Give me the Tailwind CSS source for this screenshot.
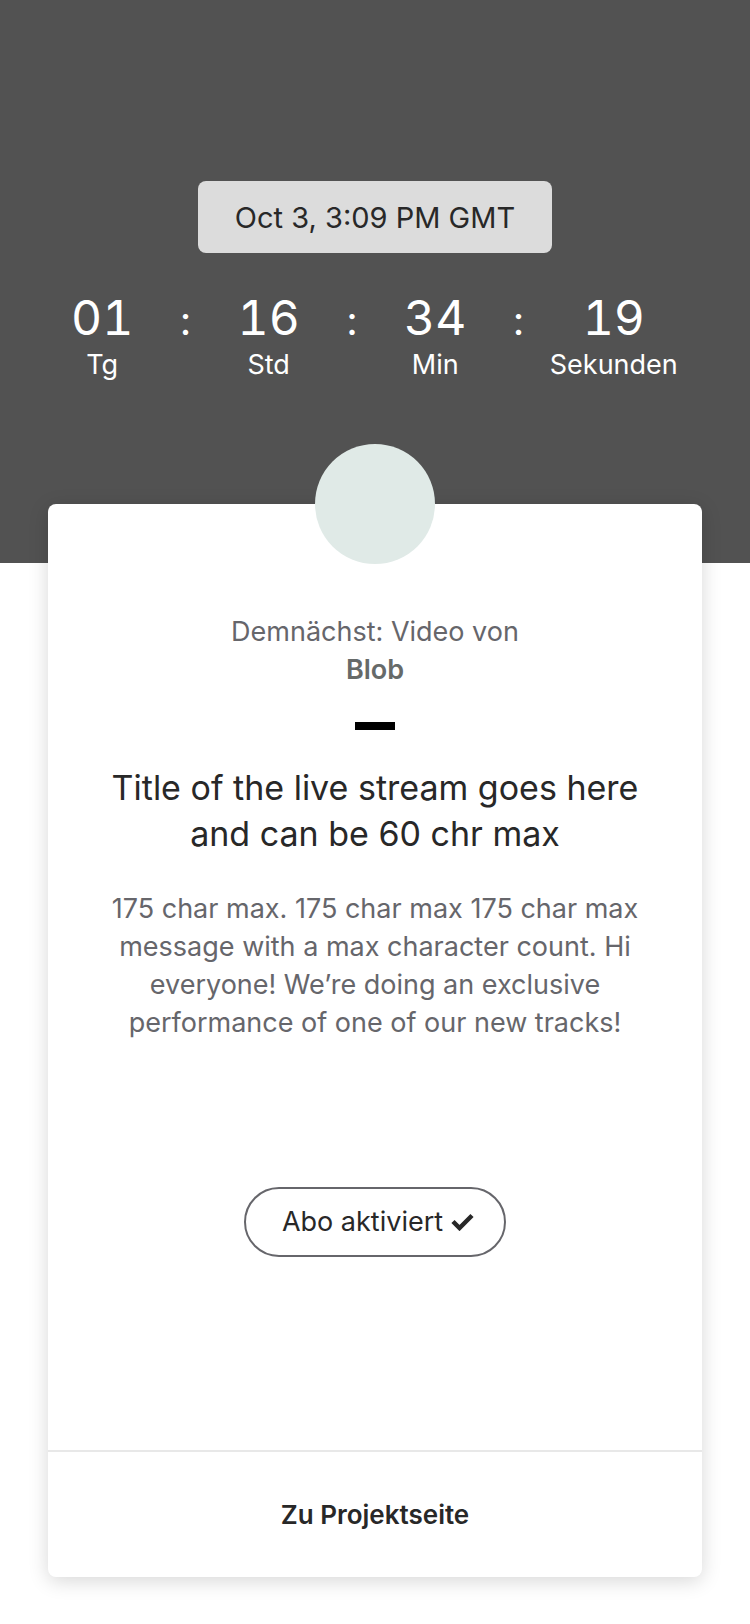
<!DOCTYPE html>
<html lang="de">
<head>
<meta charset="utf-8">
<meta name="viewport" content="width=device-width, initial-scale=1">
<title>Live-Stream</title>
<script src="https://cdn.jsdelivr.net/npm/@tailwindcss/browser@4"></script>
</head>
<body class="min-h-screen bg-white pb-12 font-['Inter','Liberation_Sans',sans-serif] text-[#282828]">
<header class="flex flex-col items-center bg-[#525252] pt-[181px] pb-[180px] text-white">
  <time class="rounded-lg bg-[#dcdcdc] px-[37px] pt-[19px] pb-[17px] text-[29px] leading-9 text-[#282828]">Oct 3, 3:09 PM GMT</time>
  <div class="mt-9 grid w-full grid-cols-[108fr_58fr_108fr_58fr_108fr_58fr_132fr] pl-12 pr-[70px] text-center" role="timer">
    <div><div class="text-5xl leading-[58px] tabular-nums">01</div><div class="text-[27px] leading-9">Tg</div></div>
    <div class="text-[40px] leading-[64px]">:</div>
    <div><div class="text-5xl leading-[58px] tabular-nums">16</div><div class="text-[27px] leading-9">Std</div></div>
    <div class="text-[40px] leading-[64px]">:</div>
    <div><div class="text-5xl leading-[58px] tabular-nums">34</div><div class="text-[27px] leading-9">Min</div></div>
    <div class="text-[40px] leading-[64px]">:</div>
    <div><div class="text-5xl leading-[58px] tabular-nums">19</div><div class="text-[27px] leading-9">Sekunden</div></div>
  </div>
</header>
<main class="relative mx-12 -mt-[59px] rounded-lg bg-white text-center shadow-[0_4px_20px_rgba(0,0,0,0.16)]">
  <div class="absolute inset-x-0 -top-[60px] mx-auto size-[120px] rounded-full bg-[#e0eae7]"></div>
  <div class="flex flex-col items-center px-12 pt-[109px] pb-[193px]">
    <p class="text-[27px] leading-[38px] text-[#66666b]">Demnächst: Video von<br><strong class="font-semibold text-[#666a69]">Blob</strong></p>
    <div class="mt-[33px] h-2 w-10 bg-black"></div>
    <h1 class="mt-[35px] text-[34px] leading-[46px]">Title of the live stream goes here<br>and can be 60 chr max</h1>
    <p class="mt-[33px] text-[27px] leading-[38px] text-[#66666b]">175 char max. 175 char max 175 char max<br>message with a max character count. Hi<br>everyone! We’re doing an exclusive<br>performance of one of our new tracks!</p>
    <button type="button" class="mt-[145px] flex h-[70px] items-center gap-2 rounded-full border-2 border-[#66666b] pr-[30px] pl-9 text-[27px]">Abo aktiviert
      <svg class="h-[18px] w-[23px]" viewBox="0 0 23 18" aria-hidden="true"><path d="M2 8.5 8.5 15 21 2.5" fill="none" stroke="#282828" stroke-width="4.5"/></svg>
    </button>
  </div>
  <a href="#" class="block border-t-2 border-[#e8e8e8] py-11 text-[26px] leading-[37px] font-semibold">Zu Projektseite</a>
</main>
</body>
</html>
